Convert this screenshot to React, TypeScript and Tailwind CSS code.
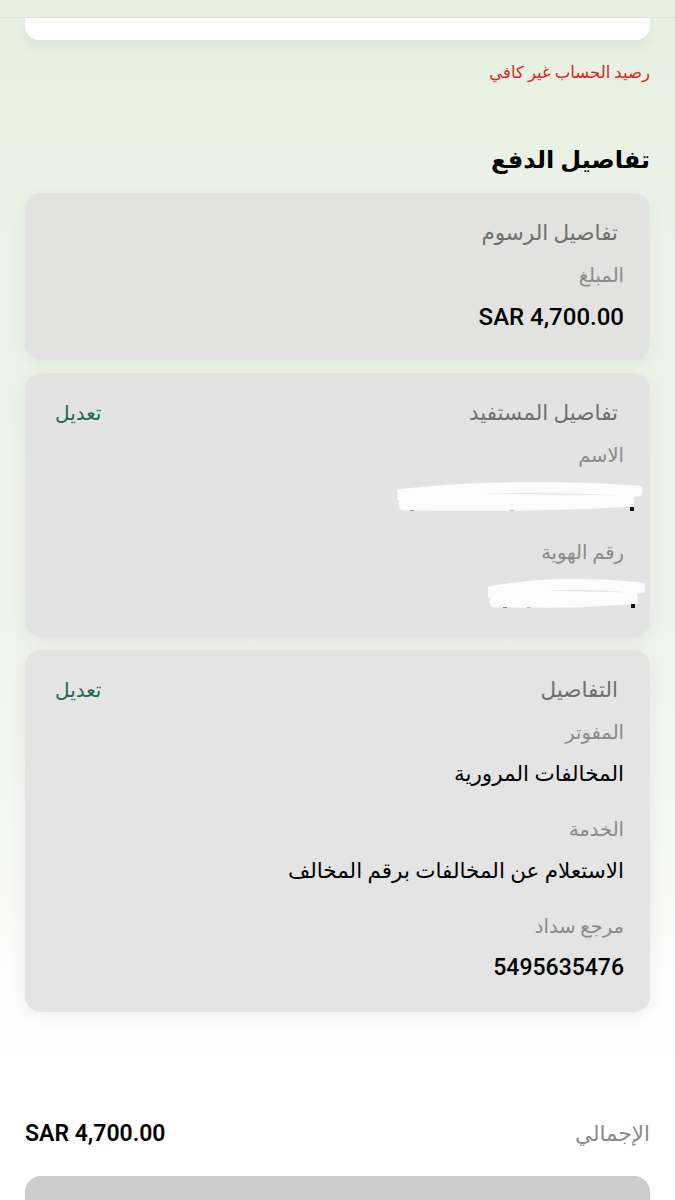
import React from "react";

const font = { fontFamily: '"Roboto", "DejaVu Sans", sans-serif' };

function Label({ children }: { children: React.ReactNode }) {
  return <div className="flex h-[42px] items-center text-[19.5px] text-[#8a8a8a]">{children}</div>;
}

function Value({ children }: { children: React.ReactNode }) {
  return <div className="flex h-[40px] items-center text-[21.5px] font-medium text-black">{children}</div>;
}

function CardTitle({ title, edit }: { title: string; edit?: boolean }) {
  return (
    <div className="flex h-[44px] items-center justify-between">
      <span className="pr-[6px] text-[21.5px] text-[#6f6f6f]">{title}</span>
      {edit && <span className="text-[20px] text-[#1e6b4c]">تعديل</span>}
    </div>
  );
}

function Redacted({ w, dots }: { w: number; dots: number[] }) {
  // scribbled-out personal data
  return (
    <svg width={w} height="36" viewBox={`0 0 ${w} 36`} className="block">
      {dots.map((x, i) => (
        <rect key={i} x={x} y={i % 2 ? 24 : 28} width="4" height="4" fill="#111" />
      ))}
      <path
        d={`M ${w - 4} 12 C ${w * 0.6} 6, ${w * 0.3} 8, 8 16 C ${w * 0.3} 22, ${w * 0.6} 20, ${w - 8} 22 C ${w * 0.6} 28, ${w * 0.3} 26, 14 26`}
        stroke="#fdfcfd"
        strokeWidth="11"
        strokeLinecap="round"
        fill="none"
      />
    </svg>
  );
}

export default function App() {
  return (
    <div
      dir="rtl"
      style={font}
      className="min-h-[1200px] w-[675px] overflow-hidden bg-[linear-gradient(180deg,#e6f0df_0%,#edf3e8_20%,#f0f3ee_55%,#ffffff_86%)]"
    >
      {/* top strip */}
      <div className="h-[18px] border-b border-[#dfe6da] bg-[#e6f1dd]" />
      <div className="mx-[25px] h-[22px] rounded-b-[14px] bg-white shadow-[0_6px_14px_rgba(0,0,0,0.05)]" />

      <div className="px-[25px]">
        <div className="mt-[19px] flex h-[28px] items-center text-[16.5px] text-[#d8261d]">رصيد الحساب غير كافي</div>

        <h1 className="mt-[53px] flex h-[40px] items-center text-[24px] font-bold text-black">تفاصيل الدفع</h1>

        <div className="mt-[13px] flex flex-col gap-[13px]">
          {/* fees */}
          <div className="rounded-[16px] bg-[#e2e3e1] pt-[18px] pb-[23px] pl-[30px] pr-[26px] shadow-[0_4px_18px_rgba(0,0,0,0.06)]">
            <CardTitle title="تفاصيل الرسوم" />
            <Label>المبلغ</Label>
            <Value>
              <span dir="ltr" className="text-[24px]">SAR 4,700.00</span>
            </Value>
          </div>

          {/* beneficiary */}
          <div className="rounded-[16px] bg-[#e3e3e3] pt-[18px] pb-[23px] pl-[30px] pr-[26px] shadow-[0_4px_18px_rgba(0,0,0,0.06)]">
            <CardTitle title="تفاصيل المستفيد" edit />
            <Label>الاسم</Label>
            <div className="-mr-[18px] flex h-[40px] items-center">
              <Redacted w={252} dots={[20, 62, 120, 190, 240]} />
            </div>
            <div className="mt-[15px]">
              <Label>رقم الهوية</Label>
            </div>
            <div className="-mr-[21px] flex h-[40px] items-center">
              <Redacted w={164} dots={[22, 34, 46, 60, 150]} />
            </div>
          </div>

          {/* details */}
          <div className="rounded-[16px] bg-[#e4e4e4] pt-[18px] pb-[24px] pl-[30px] pr-[26px] shadow-[0_4px_18px_rgba(0,0,0,0.06)]">
            <CardTitle title="التفاصيل" edit />
            <Label>المفوتر</Label>
            <Value>المخالفات المرورية</Value>
            <div className="mt-[15px]">
              <Label>الخدمة</Label>
            </div>
            <Value>الاستعلام عن المخالفات برقم المخالف</Value>
            <div className="mt-[15px]">
              <Label>مرجع سداد</Label>
            </div>
            <Value>
              <span className="text-[23px]">5495635476</span>
            </Value>
          </div>
        </div>

        {/* total */}
        <div className="mt-[102px] flex h-[40px] items-center justify-between">
          <span className="text-[21.5px] text-[#8a8a8a]">الإجمالي</span>
          <span dir="ltr" className="text-[23px] font-semibold text-black">SAR 4,700.00</span>
        </div>

        <div className="mt-[22px] h-[60px] rounded-[16px] bg-[#cccccc]" />
      </div>
    </div>
  );
}
